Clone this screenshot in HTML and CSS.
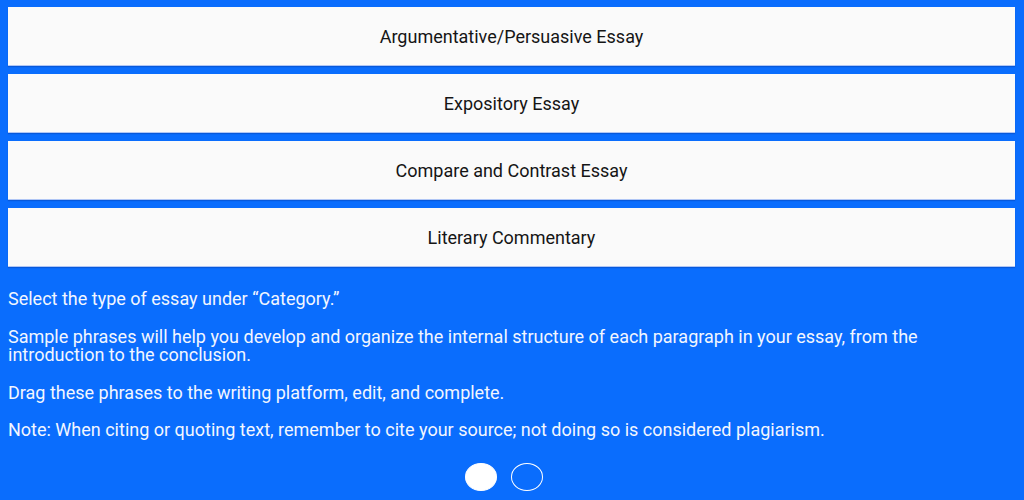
FILE: index.html
```html
<!DOCTYPE html>
<html>
<head>
<meta charset="utf-8">
<link rel="stylesheet" href="styles.css">
</head>
<body>
<div class="menu">
  <div class="btn">Argumentative/Persuasive Essay</div>
  <div class="btn">Expository Essay</div>
  <div class="btn">Compare and Contrast Essay</div>
  <div class="btn">Literary Commentary</div>
</div>
<div class="info">
  <p>Select the type of essay under “Category.”</p>
  <p>Sample phrases will help you develop and organize the internal structure of each paragraph in your essay, from the introduction to the conclusion.</p>
  <p>Drag these phrases to the writing platform, edit, and complete.</p>
  <p>Note: When citing or quoting text, remember to cite your source; not doing so is considered plagiarism.</p>
</div>
<div class="dots">
  <span class="dot on"></span>
  <span class="dot"></span>
</div>
</body>
</html>
```
FILE: styles.css
```css
html, body {
  margin: 0;
  height: 100%;
}
body {
  background: #0a6dfd;
  padding: 7px 9px 0 8px;
  box-sizing: border-box;
  font-family: Roboto, "Liberation Sans", sans-serif;
  overflow: hidden;
}
.menu {
  display: flex;
  flex-direction: column;
  gap: 9px;
}
.btn {
  height: 58px;
  background: #fafafa;
  color: #151515;
  font-size: 18px;
  display: flex;
  align-items: center;
  justify-content: center;
  box-shadow: 0 1px 0 #b0c6f5, 0 2px 1px rgba(0, 30, 120, 0.25);
}
.info {
  color: #f2f6ff;
  font-size: 18px;
  line-height: 18.5px;
  padding-top: 24px;
}
.info p {
  margin: 0 0 19px;
}
.info p:last-child {
  margin-bottom: 0;
}
.dots {
  display: flex;
  justify-content: center;
  gap: 14px;
  padding-right: 16px;
  margin-top: 23px;
}
.dot {
  width: 32px;
  height: 28px;
  border-radius: 50%;
  box-sizing: border-box;
  border: 1.5px solid #fff;
}
.dot.on {
  background: #fff;
}
```
